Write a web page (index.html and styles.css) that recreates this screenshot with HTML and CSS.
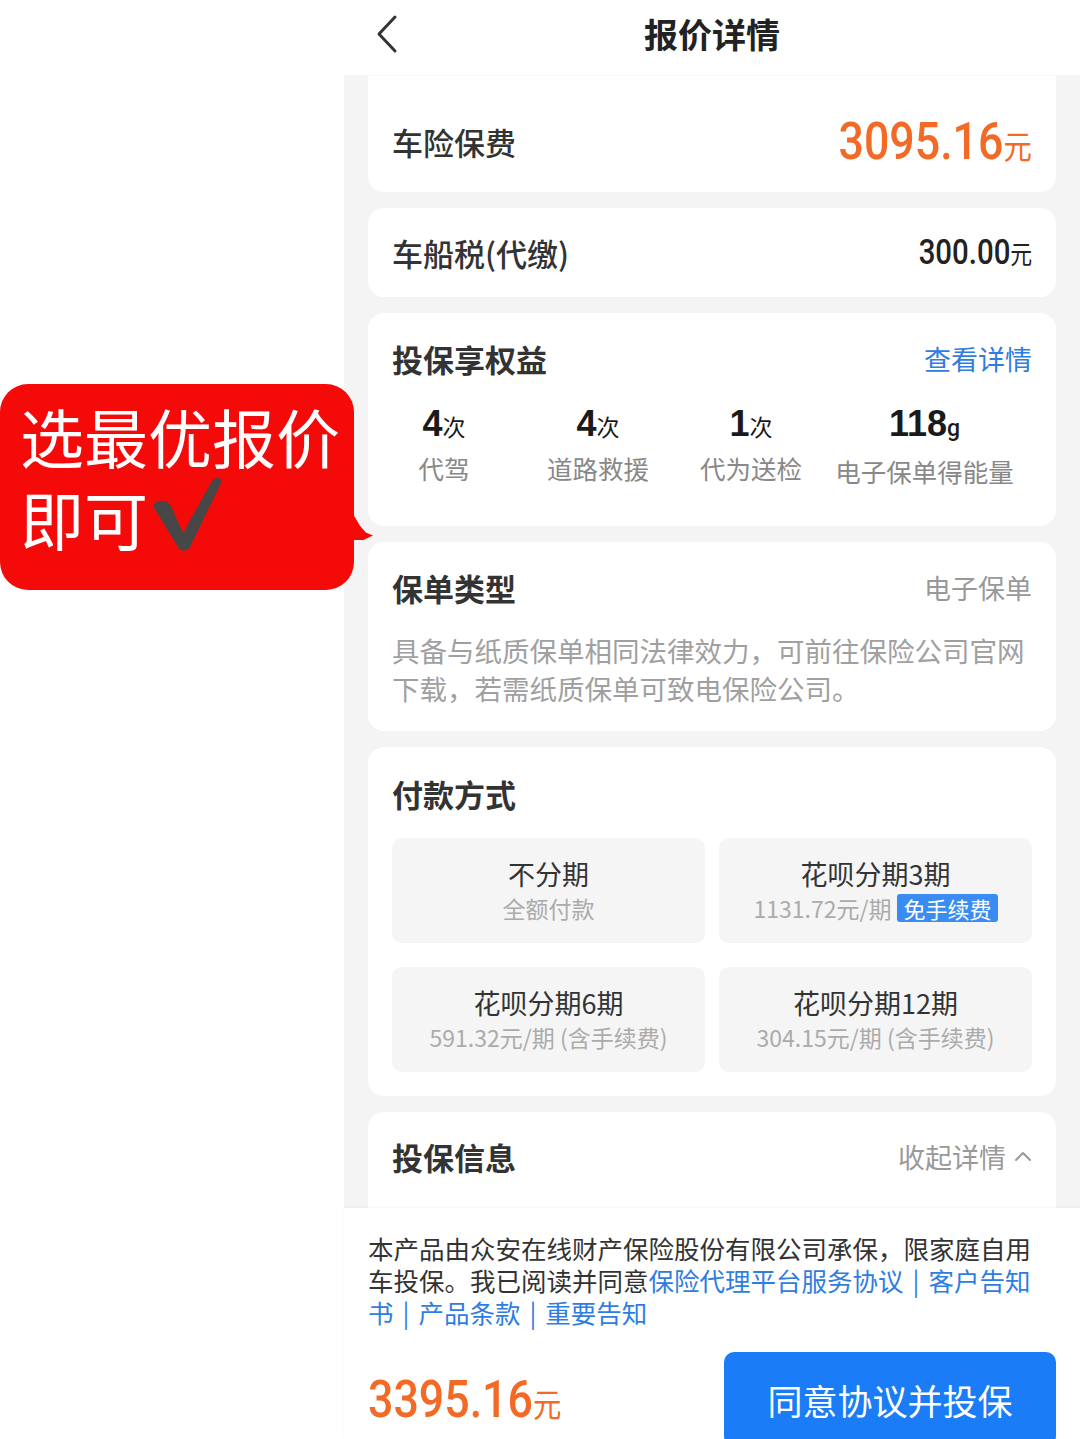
FILE: index.html
```html
<!DOCTYPE html>
<html lang="zh-CN">
  <head>
    <meta charset="utf-8">
    <title>报价详情</title>
    <link rel="stylesheet" href="styles.css">
  </head>
  <body>
    <div class="screen">
      <aside class="side">
        <div class="bubble">
          <div>选最优报价</div>
          <div>即可<svg class="check" width="76" height="76" viewBox="0 0 76 76"><path d="M3 30 C7 23 17 23 21 30 L33 57 L62 5 C64 1 71 1 72 5 L40 71 C37 76 30 76 28 71 Z" fill="#474747"/></svg></div>
        </div>
      </aside>

      <main class="phone">
        <header class="nav">
          <div class="back">
            <svg width="26" height="40" viewBox="0 0 26 40"><path d="M21 3 L5 20 L21 37" fill="none" stroke="#333" stroke-width="3" stroke-linecap="round" stroke-linejoin="round"/></svg>
          </div>
          <div class="nav-title">报价详情</div>
          <div></div>
        </header>

        <div class="scroll">
          <section class="card card-fee">
            <span class="row-label">车险保费</span>
            <span class="fee"><span class="num">3095.16</span><span class="yuan">元</span></span>
          </section>

          <section class="card card-tax">
            <span class="row-label">车船税(代缴)</span>
            <span class="tax"><span class="num">300.00</span><span class="yuan">元</span></span>
          </section>

          <section class="card card-rights">
            <div class="head">
              <h2>投保享权益</h2>
              <span class="link">查看详情</span>
            </div>
            <div class="stats">
              <div class="stat">
                <div class="stat-num">4<span class="unit">次</span></div>
                <div class="stat-label">代驾</div>
              </div>
              <div class="stat">
                <div class="stat-num">4<span class="unit">次</span></div>
                <div class="stat-label">道路救援</div>
              </div>
              <div class="stat">
                <div class="stat-num">1<span class="unit">次</span></div>
                <div class="stat-label">代为送检</div>
              </div>
              <div class="stat stat-last">
                <div class="stat-num">118<span class="unit unit-g">g</span></div>
                <div class="stat-label">电子保单得能量</div>
              </div>
            </div>
          </section>

          <section class="card card-type">
            <div class="head">
              <h2>保单类型</h2>
              <span class="muted">电子保单</span>
            </div>
            <p class="desc">具备与纸质保单相同法律效力，可前往保险公司官网下载，若需纸质保单可致电保险公司。</p>
          </section>

          <section class="card card-pay">
            <div class="head">
              <h2>付款方式</h2>
            </div>
            <div class="options">
              <div class="opt">
                <div class="opt-title">不分期</div>
                <div class="opt-sub">全额付款</div>
              </div>
              <div class="opt">
                <div class="opt-title">花呗分期3期</div>
                <div class="opt-sub">1131.72元/期<span class="badge">免手续费</span></div>
              </div>
              <div class="opt">
                <div class="opt-title">花呗分期6期</div>
                <div class="opt-sub">591.32元/期 (含手续费)</div>
              </div>
              <div class="opt">
                <div class="opt-title">花呗分期12期</div>
                <div class="opt-sub">304.15元/期 (含手续费)</div>
              </div>
            </div>
          </section>

          <section class="card card-info">
            <div class="head">
              <h2>投保信息</h2>
              <span class="muted">收起详情 <svg width="18" height="12" viewBox="0 0 18 12"><path d="M2 10 L9 3 L16 10" fill="none" stroke="#999" stroke-width="2" stroke-linecap="round" stroke-linejoin="round"/></svg></span>
            </div>
          </section>
        </div>

        <footer class="bar">
          <p class="terms">本产品由众安在线财产保险股份有限公司承保，限家庭自用车投保。我已阅读并同意<span class="link">保险代理平台服务协议</span><span class="sep">|</span><span class="link">客户告知书</span><span class="sep">|</span><span class="link">产品条款</span><span class="sep">|</span><span class="link">重要告知</span></p>
          <div class="bar-bottom">
            <span class="total"><span class="num">3395.16</span><span class="yuan">元</span></span>
            <button class="submit">同意协议并投保</button>
          </div>
        </footer>
      </main>
    </div>
  </body>
</html>
```

FILE: styles.css
```css
body {
  margin: 0;
  background-color: #FFFFFF;
  color: #333333;
  font-family: "Noto Sans CJK SC", sans-serif;
}

.screen {
  display: flex;
  height: 1439px;
  overflow: hidden;
}

/* left callout */

.side {
  width: 344px;
  flex-shrink: 0;
  padding-top: 384px;
  box-sizing: border-box;
  position: relative;
  z-index: 2;
}

.bubble {
  position: relative;
  width: 354px;
  height: 206px;
  box-sizing: border-box;
  padding: 10px 0 0 20px;
  background-color: #F50A0A;
  border-radius: 28px;
  color: #FFFFFF;
  font-size: 64px;
  font-weight: 400;
  line-height: 82px;
  white-space: nowrap;
}

.bubble::after {
  content: "";
  position: absolute;
  right: -19px;
  top: 118px;
  width: 24px;
  height: 38px;
  background-color: #F50A0A;
  clip-path: polygon(0 0, 20% 35%, 45% 62%, 70% 80%, 100% 88%, 60% 100%, 0 100%);
}

.bubble .check {
  vertical-align: top;
  margin-left: 2px;
}

/* phone */

.phone {
  width: 736px;
  flex-shrink: 0;
  display: flex;
  flex-direction: column;
}

.nav {
  height: 75px;
  flex-shrink: 0;
  box-sizing: border-box;
  padding-bottom: 8px;
  display: grid;
  grid-template-columns: 1fr auto 1fr;
  align-items: center;
}

.back {
  padding-left: 30px;
  display: flex;
}

.nav-title {
  font-size: 34px;
  font-weight: 700;
  line-height: 40px;
  color: #222222;
}

.scroll {
  height: 1133px;
  flex-shrink: 0;
  overflow: hidden;
  box-sizing: border-box;
  padding: 0 24px;
  background-color: #F4F4F4;
  display: flex;
  flex-direction: column;
  gap: 16px;
}

.card {
  flex-shrink: 0;
  background-color: #FFFFFF;
  border-radius: 16px;
  padding: 0 24px;
  box-sizing: border-box;
}

/* prices use a condensed look */
.fee,
.tax,
.total {
  display: flex;
  align-items: baseline;
  font-family: Roboto, sans-serif;
  font-weight: 500;
}

.yuan {
  font-family: "Noto Sans CJK SC", sans-serif;
  font-weight: 400;
}

.row-label {
  font-size: 31px;
  font-weight: 500;
  color: #333333;
}

.card-fee {
  height: 117px;
  padding-top: 14px;
  border-radius: 0 0 16px 16px;
  border-top: 1px solid #F7F7F7;
  display: flex;
  align-items: center;
  justify-content: space-between;
}

.fee {
  color: #F26A26;
  transform: scaleX(0.86);
  transform-origin: right center;
}

.fee .num {
  font-size: 52px;
}

.fee .yuan {
  font-size: 33px;
}

.card-tax {
  height: 89px;
  display: flex;
  align-items: center;
  justify-content: space-between;
}

.tax {
  color: #222222;
  transform: scaleX(0.84);
  transform-origin: right center;
}

.tax .num {
  font-size: 35px;
}

.tax .yuan {
  font-size: 26px;
}

.head {
  display: flex;
  align-items: center;
  justify-content: space-between;
  height: 40px;
}

.head h2 {
  margin: 0;
  font-size: 31px;
  font-weight: 700;
  color: #333333;
}

.link {
  color: #2F7DE1;
}

.head .link {
  font-size: 27px;
}

.muted {
  color: #999999;
  font-size: 27px;
  display: flex;
  align-items: center;
  gap: 8px;
}

/* rights */

.card-rights {
  padding: 25px 24px 37px;
}

.stats {
  margin-top: 26px;
  display: grid;
  grid-template-columns: 104px 204px 102px 1fr;
}

.stat {
  text-align: center;
}

.stat-last {
  padding-left: 15px;
}

.stat-num {
  font-family: "Liberation Sans", Roboto, sans-serif;
  font-size: 36px;
  font-weight: 700;
  line-height: 40px;
  color: #1A1A1A;
}

.stat-num .unit {
  font-family: "Noto Sans CJK SC", sans-serif;
  font-size: 23px;
  font-weight: 400;
}

.stat-num .unit-g {
  font-family: Roboto, sans-serif;
  font-weight: 500;
}

.stat-label {
  margin-top: 4px;
  font-size: 25.5px;
  line-height: 36px;
  color: #888888;
}

/* policy type */

.card-type {
  padding: 25px 24px 24px;
}

.desc {
  margin: 24px 0 0;
  font-size: 27.5px;
  line-height: 38px;
  color: #A0A0A0;
}

/* payment */

.card-pay {
  padding: 26px 24px 24px;
}

.options {
  margin-top: 25px;
  display: grid;
  grid-template-columns: 1fr 1fr;
  gap: 24px 14px;
}

.opt {
  height: 105px;
  background-color: #F5F5F5;
  border-radius: 10px;
  display: flex;
  flex-direction: column;
  align-items: center;
  justify-content: center;
}

.opt-title {
  font-size: 27px;
  line-height: 34px;
  color: #333333;
}

.opt-sub {
  margin-top: 1px;
  font-size: 23px;
  line-height: 32px;
  color: #ABABAB;
  display: flex;
  align-items: center;
}

.badge {
  margin-left: 6px;
  padding: 0 6px;
  border-radius: 3px;
  background-color: #3B8CF2;
  color: #FFFFFF;
  font-size: 22px;
  line-height: 28px;
}

.card-info {
  padding: 24px 24px;
  flex-grow: 1;
  border-radius: 16px 16px 0 0;
}

/* bottom bar */

.bar {
  flex-grow: 1;
  min-height: 0;
  position: relative;
  padding: 24px 24px 0;
  background-color: #FFFFFF;
  box-shadow: 0 -1px 3px rgba(0, 0, 0, 0.04);
}

.terms {
  margin: 0;
  font-size: 25.5px;
  line-height: 32px;
  color: #333333;
}

.sep {
  margin: 0 9px;
  color: #2F7DE1;
}

.bar-bottom {
  margin-top: 24px;
  display: flex;
  align-items: center;
  justify-content: space-between;
}

.total {
  color: #F26A26;
  transform: scaleX(0.86);
  transform-origin: left center;
}

.total .num {
  font-size: 52px;
}

.total .yuan {
  font-size: 33px;
}

.submit {
  width: 332px;
  height: 94px;
  flex-shrink: 0;
  border: none;
  border-radius: 10px;
  background-color: #1A7CF6;
  color: #FFFFFF;
  font-family: "Noto Sans CJK SC", sans-serif;
  font-size: 35px;
}
```
